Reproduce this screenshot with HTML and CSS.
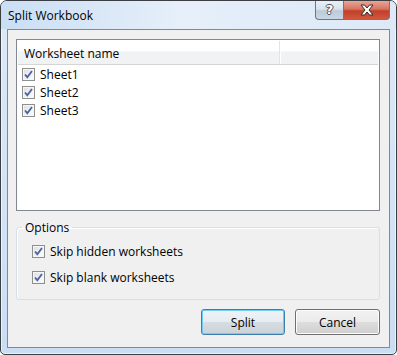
FILE: index.html
```html
<!DOCTYPE html>
<html lang="en">
<head>
    <meta charset="UTF-8">
    <title>Split Workbook</title>
    <link rel="stylesheet" href="styles.css">
</head>
<body>
    <div class="window">
        <div class="titlebar">
            <span class="title">Split Workbook</span>
            <div class="caption-buttons">
                <div class="cap-btn help-btn"><span class="help-glyph">?</span></div>
                <div class="cap-btn close-btn">
                    <svg width="16" height="12" viewBox="0 0 16 12">
                        <path d="M2 1 L5.5 1 L8 4 L10.5 1 L14 1 L10 6 L14 11 L10.5 11 L8 8 L5.5 11 L2 11 L6 6 Z" fill="#fff" stroke="#3a2a28" stroke-width="1" stroke-linejoin="round"/>
                    </svg>
                </div>
            </div>
        </div>

        <div class="client">
            <div class="listbox">
                <div class="list-header">
                    <div class="col-name">Worksheet name</div>
                    <div class="col-extra"></div>
                </div>
                <div class="list-row">
                    <span class="check"><svg width="11" height="11" viewBox="0 0 11 11"><path d="M2 5.5 L4.3 8.2 L9 2" fill="none" stroke="#4a62a8" stroke-width="1.8"/></svg></span>
                    <span>Sheet1</span>
                </div>
                <div class="list-row">
                    <span class="check"><svg width="11" height="11" viewBox="0 0 11 11"><path d="M2 5.5 L4.3 8.2 L9 2" fill="none" stroke="#4a62a8" stroke-width="1.8"/></svg></span>
                    <span>Sheet2</span>
                </div>
                <div class="list-row">
                    <span class="check"><svg width="11" height="11" viewBox="0 0 11 11"><path d="M2 5.5 L4.3 8.2 L9 2" fill="none" stroke="#4a62a8" stroke-width="1.8"/></svg></span>
                    <span>Sheet3</span>
                </div>
            </div>

            <fieldset class="options">
                <legend>Options</legend>
                <div class="option-row">
                    <span class="check"><svg width="11" height="11" viewBox="0 0 11 11"><path d="M2 5.5 L4.3 8.2 L9 2" fill="none" stroke="#4a62a8" stroke-width="1.8"/></svg></span>
                    <span>Skip hidden worksheets</span>
                </div>
                <div class="option-row">
                    <span class="check"><svg width="11" height="11" viewBox="0 0 11 11"><path d="M2 5.5 L4.3 8.2 L9 2" fill="none" stroke="#4a62a8" stroke-width="1.8"/></svg></span>
                    <span>Skip blank worksheets</span>
                </div>
            </fieldset>

            <div class="button-row">
                <button class="button default-button">Split</button>
                <button class="button">Cancel</button>
            </div>
        </div>
    </div>
</body>
</html>
```

FILE: styles.css
```css
/* Dialog window */
body {
    margin: 0;
    background: #fff;
    font-family: "Open Sans", "Noto Sans", sans-serif;
    font-size: 12px;
    color: #000;
}

.window {
    width: 397px;
    height: 355px;
    box-sizing: border-box;
    border: 1px solid #3b3f44;
    border-radius: 7px 7px 5px 5px;
    background: linear-gradient(180deg, #dce9f7 0%, #d2e3f6 60%, #c9ddf3 100%);
    box-shadow: inset 0 0 0 1px rgba(255, 255, 255, 0.6);
    display: flex;
    flex-direction: column;
    overflow: hidden;
}

.titlebar {
    height: 28px;
    display: flex;
    align-items: flex-start;
    background: linear-gradient(90deg, #cadef4 0%, #e6effa 45%, #dde9f7 100%);
}

.title {
    margin: 7px 0 0 7px;
    line-height: 16px;
}

.caption-buttons {
    margin-left: auto;
    margin-right: 6px;
    display: flex;
}

.cap-btn {
    height: 19px;
    box-sizing: border-box;
    border: 1px solid #6c7686;
    border-top: none;
    display: flex;
    align-items: center;
    justify-content: center;
}

.help-btn {
    width: 28px;
    border-right: none;
    border-radius: 0 0 0 4px;
    background: linear-gradient(180deg, #e9eff6 0%, #d8e2ee 45%, #bccadb 55%, #c9d6e4 100%);
}

.help-glyph {
    font-family: "DejaVu Sans", sans-serif;
    font-weight: bold;
    font-size: 13px;
    color: #fff;
    text-shadow: 1px 0 #4a5362, -1px 0 #4a5362, 0 1px #4a5362, 0 -1px #4a5362;
    line-height: 14px;
}

.close-btn {
    width: 47px;
    border-radius: 0 0 4px 0;
    background: linear-gradient(180deg, #e9a596 0%, #d67560 45%, #c0402a 55%, #d4563d 100%);
}

/* Client area */
.client {
    flex: 1;
    margin: 0 6px 6px 6px;
    border: 1px solid #7e8a99;
    background: #f0f0f0;
    padding: 9px 9px 0 8px;
    display: flex;
    flex-direction: column;
}

.listbox {
    height: 172px;
    box-sizing: border-box;
    border: 1px solid #828790;
    background: #fff;
    padding: 1px;
}

.list-header {
    height: 23px;
    display: flex;
    border-bottom: 1px solid #d5d5d5;
    background: linear-gradient(180deg, #fff 0%, #fff 45%, #f1f2f4 46%, #f1f2f4 100%);
}

.col-name {
    width: 255px;
    padding: 5px 0 0 6px;
    line-height: 16px;
    border-right: 1px solid #e3e4e6;
    box-shadow: 1px 0 0 #fff;
}

.list-row {
    height: 18px;
    display: flex;
    align-items: center;
    padding-left: 4px;
    gap: 5px;
}

.list-row:first-of-type {
    margin-top: 2px;
}

.check {
    width: 13px;
    height: 13px;
    box-sizing: border-box;
    border: 1px solid #8e8f8f;
    background: linear-gradient(135deg, #dcdcdc 0%, #f4f4f4 60%, #fefefe 100%);
    box-shadow: inset 0 0 0 1px #f6f6f6;
    display: flex;
    align-items: center;
    justify-content: center;
}

.check svg {
    display: block;
}

/* Options group */
.options {
    margin: 9px 0 0 0;
    padding: 3px 0 9px 5px;
    border: 1px solid #d5dfe5;
    border-radius: 3px;
    box-shadow: inset 1px 1px 0 #fff;
}

.options legend {
    padding: 0 3px;
    line-height: 15px;
}

.option-row {
    height: 26px;
    display: flex;
    align-items: center;
    padding-left: 10px;
    gap: 5px;
}

/* Buttons */
.button-row {
    display: flex;
    justify-content: flex-end;
    gap: 10px;
    margin-top: 9px;
}

.button {
    width: 85px;
    height: 26px;
    font-family: inherit;
    font-size: 12px;
    color: #000;
    border: 1px solid #707070;
    border-radius: 3px;
    background: linear-gradient(180deg, #f2f2f2 0%, #ebebeb 48%, #dddddd 52%, #cfcfcf 100%);
    box-shadow: inset 0 0 0 1px #fcfcfc;
    padding: 0;
}

.default-button {
    width: 84px;
    border-color: #3c7fb1;
    background: linear-gradient(180deg, #eef3f6 0%, #e6ecef 48%, #d6dde2 52%, #cbd3d8 100%);
    box-shadow: inset 0 0 0 1px #6fcdf5;
}
```
